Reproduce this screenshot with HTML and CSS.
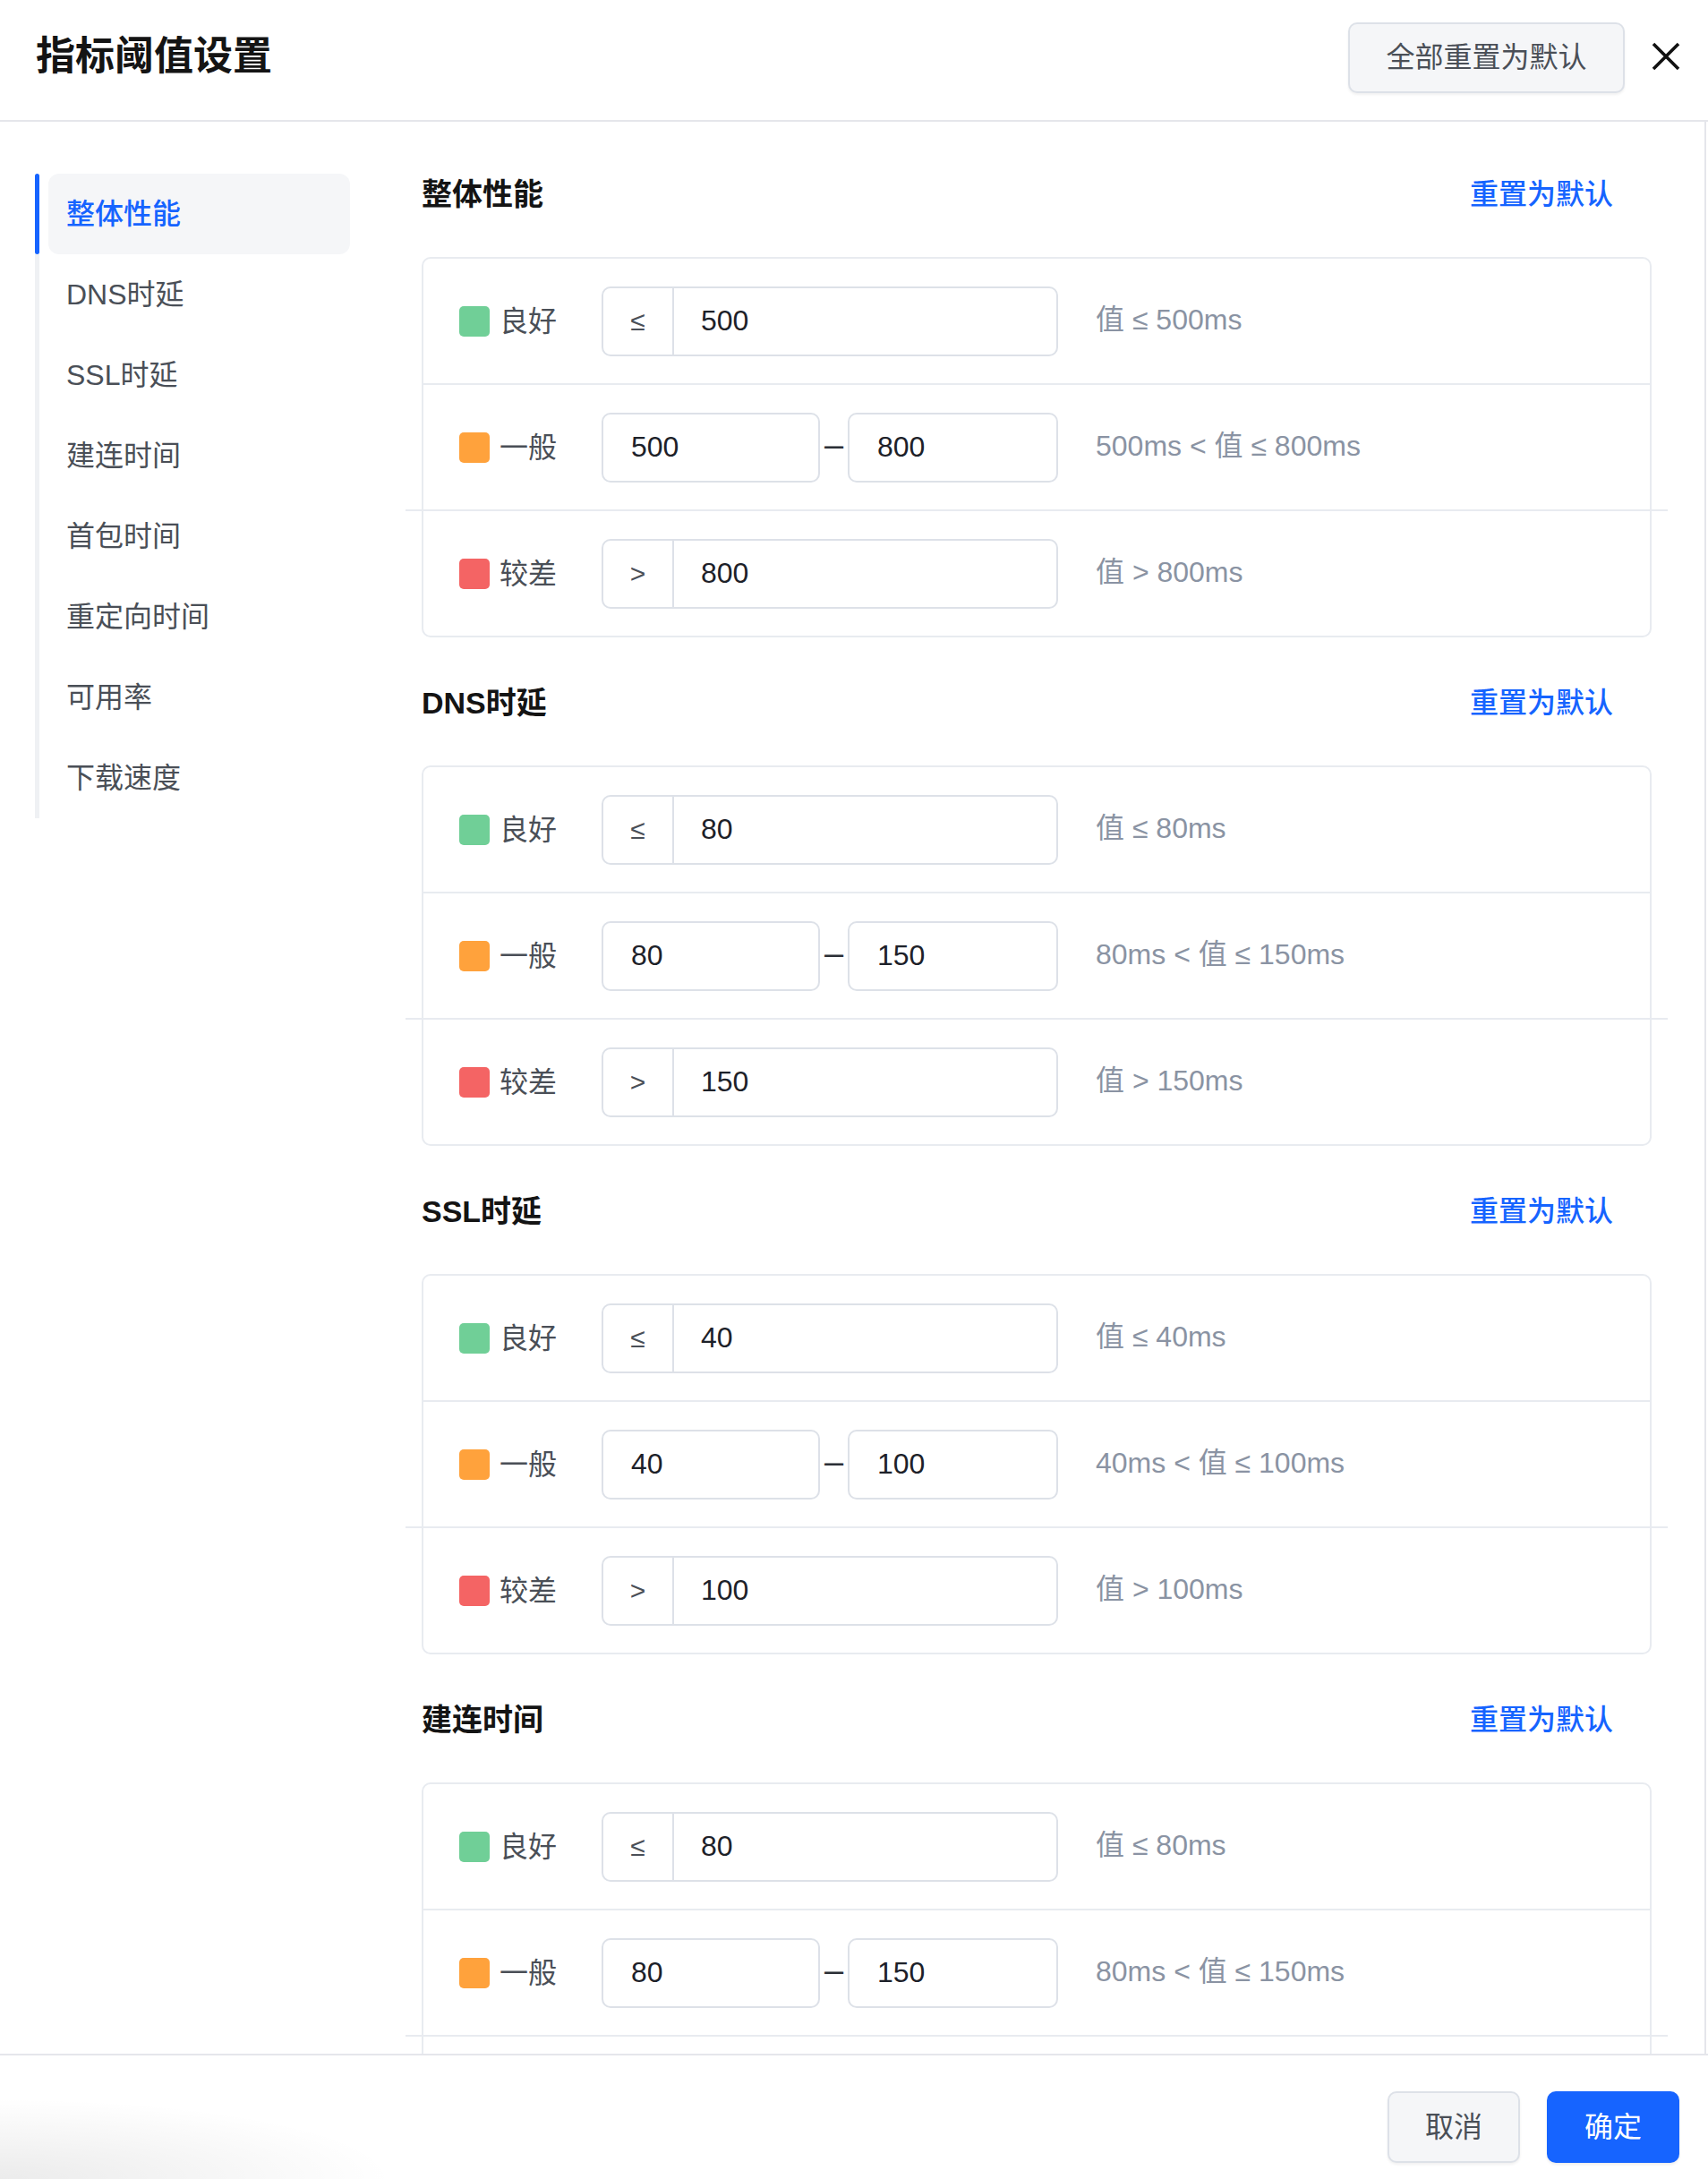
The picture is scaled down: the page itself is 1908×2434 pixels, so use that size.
FILE: index.html
```html
<!DOCTYPE html>
<html lang="zh-CN">
<head>
<meta charset="utf-8">
<title>指标阈值设置</title>
<link rel="stylesheet" href="styles.css">
</head>
<body>
<div class="header">
  <div class="title">指标阈值设置</div>
  <div class="btn btn-ghost reset-all">全部重置为默认</div>
  <svg class="close" viewBox="0 0 32 32" width="32" height="32"><path d="M2 2 L30 30 M30 2 L2 30" stroke="#111" stroke-width="3.6" fill="none"/></svg>
</div>
<div class="body">
  <div class="sidebar">
    <div class="nav-row active"><span class="bar"></span><div class="item">整体性能</div></div>
    <div class="nav-row"><span class="bar"></span><div class="item">DNS时延</div></div>
    <div class="nav-row"><span class="bar"></span><div class="item">SSL时延</div></div>
    <div class="nav-row"><span class="bar"></span><div class="item">建连时间</div></div>
    <div class="nav-row"><span class="bar"></span><div class="item">首包时间</div></div>
    <div class="nav-row"><span class="bar"></span><div class="item">重定向时间</div></div>
    <div class="nav-row"><span class="bar"></span><div class="item">可用率</div></div>
    <div class="nav-row"><span class="bar"></span><div class="item">下载速度</div></div>
  </div>
  <div class="main">
    <div class="section">
      <div class="sec-head"><div class="sec-title">整体性能</div><div class="link">重置为默认</div></div>
      <div class="card">
        <div class="row"><div class="level"><span class="sq good"></span><span class="lvl-text">良好</span></div><div class="group"><div class="prefix">≤</div><div class="val">500</div></div><div class="desc">值 ≤ 500ms</div></div>
        <div class="divider"></div>
        <div class="row"><div class="level"><span class="sq mid"></span><span class="lvl-text">一般</span></div><div class="range"><div class="inp a">500</div><div class="dash">–</div><div class="inp b">800</div></div><div class="desc">500ms &lt; 值 ≤ 800ms</div></div>
        <div class="divider wide"></div>
        <div class="row"><div class="level"><span class="sq bad"></span><span class="lvl-text">较差</span></div><div class="group"><div class="prefix">&gt;</div><div class="val">800</div></div><div class="desc">值 &gt; 800ms</div></div>
      </div>
    </div>
    <div class="section">
      <div class="sec-head"><div class="sec-title">DNS时延</div><div class="link">重置为默认</div></div>
      <div class="card">
        <div class="row"><div class="level"><span class="sq good"></span><span class="lvl-text">良好</span></div><div class="group"><div class="prefix">≤</div><div class="val">80</div></div><div class="desc">值 ≤ 80ms</div></div>
        <div class="divider"></div>
        <div class="row"><div class="level"><span class="sq mid"></span><span class="lvl-text">一般</span></div><div class="range"><div class="inp a">80</div><div class="dash">–</div><div class="inp b">150</div></div><div class="desc">80ms &lt; 值 ≤ 150ms</div></div>
        <div class="divider wide"></div>
        <div class="row"><div class="level"><span class="sq bad"></span><span class="lvl-text">较差</span></div><div class="group"><div class="prefix">&gt;</div><div class="val">150</div></div><div class="desc">值 &gt; 150ms</div></div>
      </div>
    </div>
    <div class="section">
      <div class="sec-head"><div class="sec-title">SSL时延</div><div class="link">重置为默认</div></div>
      <div class="card">
        <div class="row"><div class="level"><span class="sq good"></span><span class="lvl-text">良好</span></div><div class="group"><div class="prefix">≤</div><div class="val">40</div></div><div class="desc">值 ≤ 40ms</div></div>
        <div class="divider"></div>
        <div class="row"><div class="level"><span class="sq mid"></span><span class="lvl-text">一般</span></div><div class="range"><div class="inp a">40</div><div class="dash">–</div><div class="inp b">100</div></div><div class="desc">40ms &lt; 值 ≤ 100ms</div></div>
        <div class="divider wide"></div>
        <div class="row"><div class="level"><span class="sq bad"></span><span class="lvl-text">较差</span></div><div class="group"><div class="prefix">&gt;</div><div class="val">100</div></div><div class="desc">值 &gt; 100ms</div></div>
      </div>
    </div>
    <div class="section">
      <div class="sec-head"><div class="sec-title">建连时间</div><div class="link">重置为默认</div></div>
      <div class="card">
        <div class="row"><div class="level"><span class="sq good"></span><span class="lvl-text">良好</span></div><div class="group"><div class="prefix">≤</div><div class="val">80</div></div><div class="desc">值 ≤ 80ms</div></div>
        <div class="divider"></div>
        <div class="row"><div class="level"><span class="sq mid"></span><span class="lvl-text">一般</span></div><div class="range"><div class="inp a">80</div><div class="dash">–</div><div class="inp b">150</div></div><div class="desc">80ms &lt; 值 ≤ 150ms</div></div>
        <div class="divider wide"></div>
        <div class="row"><div class="level"><span class="sq bad"></span><span class="lvl-text">较差</span></div><div class="group"><div class="prefix">&gt;</div><div class="val">150</div></div><div class="desc">值 &gt; 150ms</div></div>
      </div>
    </div>
  </div>
</div>
<div class="footer">
  <div class="btn btn-ghost fbtn">取消</div>
  <div class="btn btn-primary fbtn">确定</div>
</div>
</body>
</html>
```
FILE: styles.css
```css
* { box-sizing: border-box; margin: 0; padding: 0; }
html, body { width: 1908px; height: 2434px; overflow: hidden; background: #fff; }
body {
  font-family: "Liberation Sans", "Noto Sans CJK SC", sans-serif;
  color: #1d2129;
}

.header {
  height: 136px;
  border-bottom: 2px solid #e5e6eb;
  display: flex;
  align-items: center;
  padding: 0 31px 8px 40px;
}
.title {
  flex: 1;
  font-size: 44px;
  font-weight: 700;
  line-height: 60px;
  color: #141414;
}
.btn {
  display: flex;
  align-items: center;
  justify-content: center;
  border-radius: 10px;
  font-size: 32px;
  line-height: 1;
}
.btn-ghost {
  background: #f5f6f8;
  border: 2px solid #dde1e8;
  color: #4a4f57;
  box-shadow: 0 2px 3px rgba(0, 0, 0, 0.06);
}
.btn-primary {
  background: #1664ff;
  color: #fff;
  box-shadow: 0 2px 3px rgba(0, 0, 0, 0.08);
}
.reset-all { width: 309px; height: 79px; margin-top: 2px; }
.close { width: 32px; height: 32px; margin-left: 30px; }

.body {
  display: flex;
  width: 1906px;
  height: 2158px;
  overflow: hidden;
  border-right: 2px solid #e5e6eb;
}

.sidebar {
  flex: none;
  width: 391px;
  padding: 58px 0 0 39px;
}
.nav-row { display: flex; height: 90px; }
.bar { flex: none; width: 5px; background: #eff1f4; }
.nav-row.active .bar { background: #1664ff; border-radius: 3px; }
.item {
  margin-left: 10px;
  width: 337px;
  border-radius: 12px;
  padding-left: 20px;
  font-size: 32px;
  line-height: 90px;
  color: #4a4f57;
}
.nav-row.active .item { background: #f5f6f8; color: #1664ff; font-weight: 500; }

.main {
  flex: none;
  width: 1374px;
  margin-left: 80px;
  padding-top: 53px;
}
.section { margin-bottom: 45px; }
.sec-head {
  height: 50px;
  display: flex;
  align-items: center;
  justify-content: space-between;
  margin-bottom: 48px;
  padding-right: 43px;
}
.sec-title { font-size: 34px; font-weight: 700; color: #141414; }
.link { font-size: 32px; color: #1664ff; font-weight: 500; }

.card { border: 2px solid #e8ebf0; border-radius: 10px; }
.row {
  height: 139px;
  display: flex;
  align-items: center;
  padding-left: 40px;
}
.divider { height: 2px; background: #e8ebf0; }
.divider.wide { margin: 0 -20px; }

.level { flex: none; width: 159px; display: flex; align-items: center; }
.sq { width: 34px; height: 34px; border-radius: 5px; margin-right: 11px; }
.sq.good { background: #70cf97; }
.sq.mid { background: #ffa23c; }
.sq.bad { background: #f46464; }
.lvl-text { font-size: 32px; color: #4a4f57; line-height: 1; }

.group {
  flex: none;
  width: 510px;
  height: 78px;
  border: 2px solid #dde1e8;
  border-radius: 10px;
  display: flex;
  align-items: center;
}
.prefix {
  width: 79px;
  height: 100%;
  border-right: 2px solid #dde1e8;
  display: flex;
  align-items: center;
  justify-content: center;
  font-size: 30px;
  color: #4a4f57;
}
.val { padding-left: 30px; font-size: 32px; color: #1d2129; }

.range { flex: none; width: 510px; display: flex; align-items: center; }
.inp {
  height: 78px;
  border: 2px solid #dde1e8;
  border-radius: 10px;
  display: flex;
  align-items: center;
  padding-left: 31px;
  font-size: 32px;
  color: #1d2129;
}
.inp.a { width: 244px; }
.inp.b { width: 235px; }
.dash { width: 31px; text-align: center; font-size: 38px; line-height: 1; color: #2b2f36; margin-bottom: 5px; }

.desc { margin-left: 42px; font-size: 32px; line-height: 40px; color: #8a93a3; margin-bottom: 3px; }

.footer {
  height: 140px;
  border-top: 2px solid #e5e6eb;
  display: flex;
  justify-content: flex-end;
  gap: 30px;
  padding: 40px 32px 0;
  background: radial-gradient(440px 90px at 0 100%, rgba(0, 0, 0, 0.08), rgba(0, 0, 0, 0));
}
.fbtn { width: 148px; height: 80px; }
```
